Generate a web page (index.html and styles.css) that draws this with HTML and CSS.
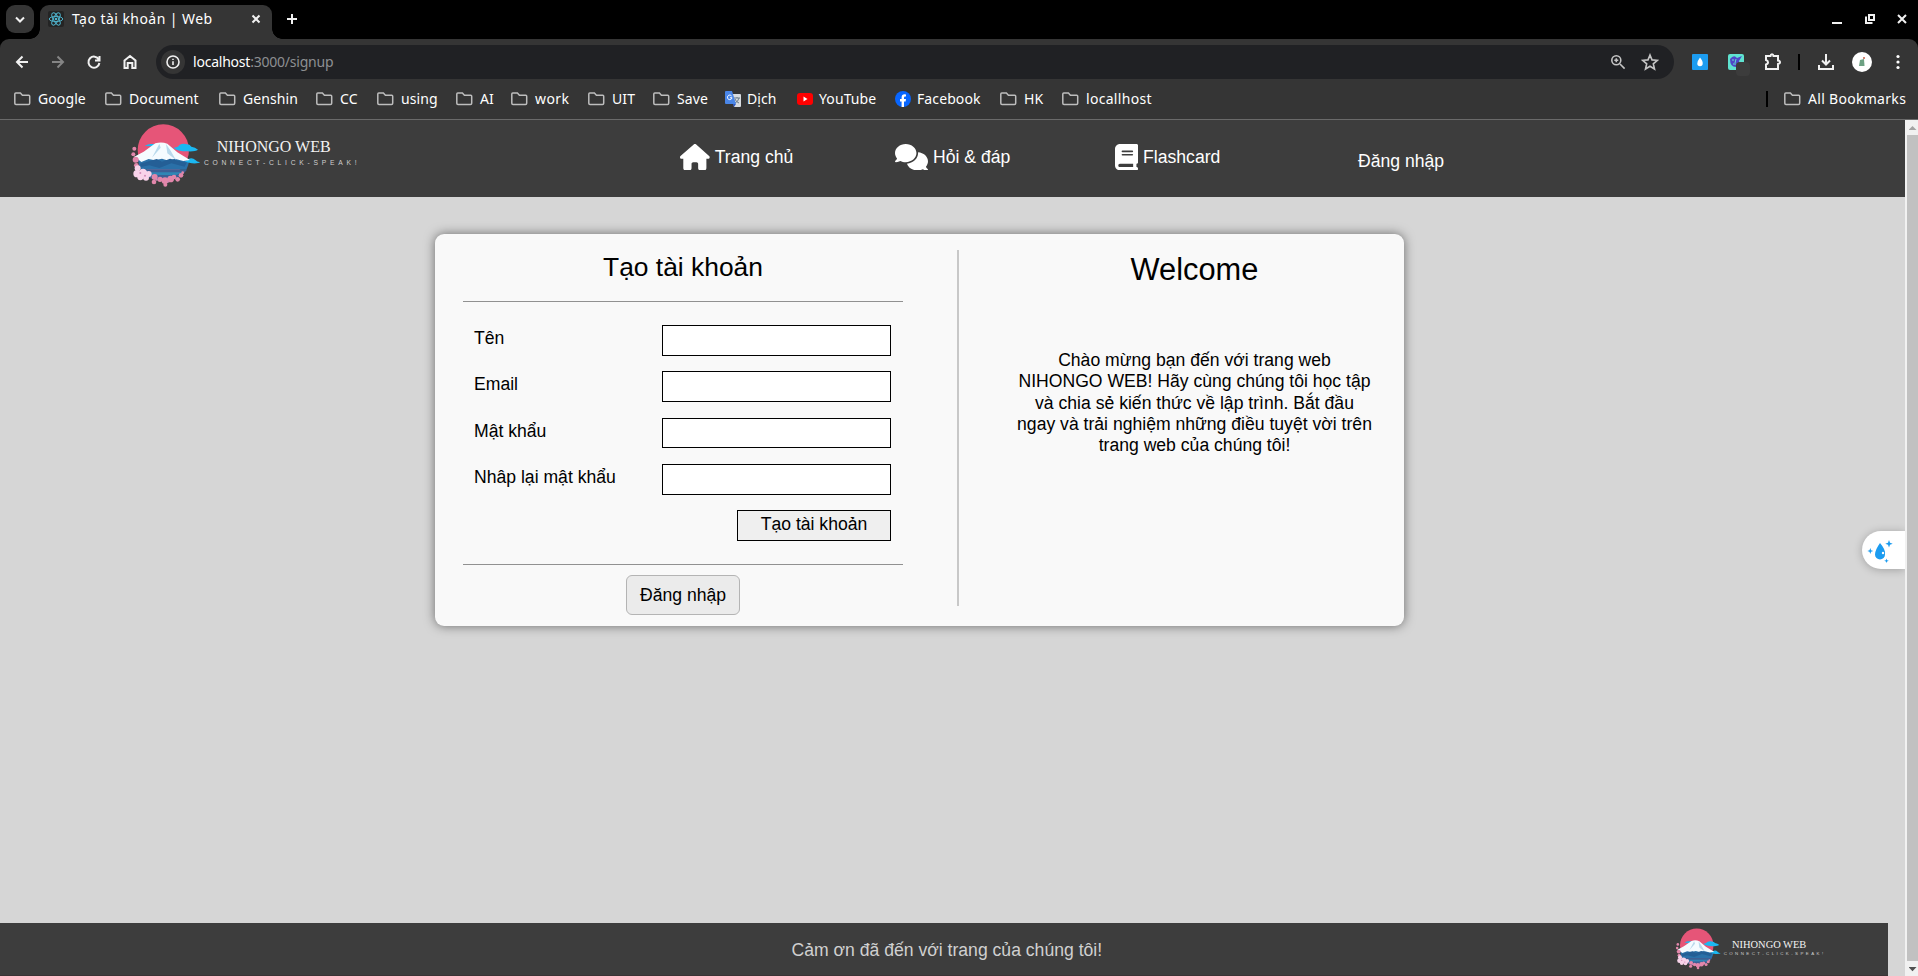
FILE: index.html
```html
<!DOCTYPE html>
<html lang="vi">
<head>
<meta charset="utf-8">
<title>Tạo tài khoản | Web</title>
<link rel="stylesheet" href="styles.css">
</head>
<body>
<svg class="defs" width="0" height="0">
  <symbol id="folder" viewBox="0 0 17 14"><path d="M1.800 1h4.600l2 2.200h6.300q1 0 1 1v7q0 1.200-1.200 1.200H2Q.8 12.400.8 11.200V2Q.8 1 1.800 1z" fill="none" stroke="#bdbdbd" stroke-width="1.500"/></symbol>
  <symbol id="fuji" viewBox="60 35 216 200">
    <circle cx="160" cy="119" r="77" fill="#e65578"/>
    <path d="M84 148q76-28 154 0q-2 16-9 30H94q-9-14-10-30z" fill="#2a70a8"/>
    <path d="M92 178h139q-24 34-70 34t-69-34z" fill="#3d5f94"/>
    <path d="M100 186h118l-20 8h-78z" fill="#2f86b5"/>
    <path d="M104 107q12-8 22-6l14 1-8 6zM190 112q14 0 18-8 12-7 22-2 10 0 14 7 12 2 20 9-8 6-30 5-34 0-44-11zM224 153q8 0 10-6 12-8 22 2 5 5 14 7-4 4-24 3-14-1-22-6z" fill="#1bb8f2"/>
    <path d="M71 140l30-16 35-25q18-6 36 1l30 26 38 23-20 3-26-7-18 6-20-6-22 5-18-4-22 9-10-8z" fill="#f5fbff"/>
    <path d="M148 100l-22 42 26-30zM168 101l4 28 26 20-16-28z" fill="#b9d9ec"/>
    <path d="M90 160l50-14 16 8 24-9 50 12-6 12-40-10-36 14-30-8-26 5z" fill="#245f96"/>
    <g fill="#e287ab"><circle cx="73" cy="115" r="6"/><circle cx="70" cy="132" r="6"/><circle cx="77" cy="148" r="9"/><circle cx="79" cy="165" r="7"/><circle cx="134" cy="200" r="9"/><circle cx="132" cy="215" r="7"/><circle cx="150" cy="207" r="8"/><circle cx="165" cy="211" r="10"/><circle cx="166" cy="223" r="6"/><circle cx="182" cy="206" r="10"/><circle cx="192" cy="200" r="7"/><circle cx="203" cy="207" r="7"/><circle cx="213" cy="195" r="7"/><circle cx="218" cy="187" r="4"/></g>
    <g fill="#f8d3ea"><circle cx="83" cy="174" r="9"/><circle cx="81" cy="190" r="11"/><circle cx="99" cy="188" r="13"/><circle cx="91" cy="201" r="9"/><circle cx="108" cy="202" r="9"/><circle cx="116" cy="191" r="9"/></g>
    <g fill="#d18bb8"><circle cx="91" cy="188" r="3"/><circle cx="105" cy="196" r="3"/><circle cx="140" cy="208" r="3"/><circle cx="174" cy="214" r="3"/></g>
  </symbol>
</svg>

<div class="tabstrip">
  <div class="tab-search"><svg width="28" height="28"><path d="M10 12.500l4 4 4-4" class="w2"/></svg></div>
  <div class="tab">
    <svg width="16" height="16" viewBox="0 0 16 16"><rect width="16" height="16" rx="2" fill="#242424"/><g fill="none" stroke="#4fb3cc" stroke-width="1"><ellipse cx="8" cy="8" rx="6.800" ry="2.600"/><ellipse cx="8" cy="8" rx="6.800" ry="2.600" transform="rotate(60 8 8)"/><ellipse cx="8" cy="8" rx="6.800" ry="2.600" transform="rotate(120 8 8)"/></g><circle cx="8" cy="8" r="1.300" fill="#4fb3cc"/></svg>
    <span class="tab-title">Tạo tài khoản | Web</span>
    <svg class="tab-close" width="10" height="10"><path d="M1.500 1.500l7 7m0-7l-7 7" class="w2"/></svg>
  </div>
  <svg class="new-tab" width="12" height="12"><path d="M6 1v10M1 6h10" class="w2"/></svg>
  <div class="window-buttons">
    <svg width="10" height="10"><path d="M0 9h10" class="w2"/></svg>
    <svg width="10" height="10"><path d="M4 1h5v5H4zM1 2.500V9h6.500" class="w2"/></svg>
    <svg width="10" height="10"><path d="M1 1l8 8m0-8l-8 8" class="w2"/></svg>
  </div>
</div>

<div class="toolbar">
  <div class="nav-buttons">
    <svg width="16" height="16"><path d="M14 8H3m5.500-5.500L3 8l5.500 5.500" class="w2"/></svg>
    <svg width="16" height="16"><path d="M2 8h11M7.500 2.500L13 8l-5.500 5.500" class="w2 dim"/></svg>
    <svg width="16" height="16"><path d="M12.800 5.500A5.500 5.500 0 1 0 13.400 9M13.500 2v4.500H9" class="w2"/></svg>
    <svg width="16" height="16"><path d="M2.500 6.500L8 2l5.500 4.500V14h-3.200V9H5.700v5H2.500z" class="w2"/></svg>
  </div>
  <div class="omnibox">
    <span class="site-info"><svg width="16" height="16"><circle cx="8" cy="8" r="6" class="w2 thin"/><path d="M8 7.300V11M8 4.700v1.400" class="w2 thin"/></svg></span>
    <span class="url">localhost<span class="url-rest">:3000/signup</span></span>
    <svg class="zoom-icon" width="16" height="16"><g class="g2"><circle cx="6.300" cy="6.300" r="4.500"/><path d="M10 10l4.600 4.600M4.300 6.300h4M6.300 4.300v4"/></g></svg>
    <svg class="star" width="18" height="18"><path d="M9 2l2 4.900 5.300.4-4 3.500 1.200 5.200L9 13.200 4.500 16l1.200-5.200-4-3.500L7 6.900z" class="g2"/></svg>
  </div>
  <div class="extensions">
    <svg width="16" height="16"><rect width="16" height="16" rx="1" fill="#1c9cf0"/><path d="M8 3.500q3 3.500 2.700 6a2.700 2.700 0 0 1-5.400 0q0-2.500 2.700-6z" fill="#fff"/></svg>
    <svg width="22" height="22"><rect width="16" height="16" rx="2" fill="#5fe3d0"/><path d="M2 5q4-5 7-1l5-2-3 5q2 4-3 6-6 0-6-8z" fill="#5046c8"/><path d="M5 5v2m3-2l-1 4m-2 1h3" stroke="#5fe3d0"/><rect x="8" y="8" width="14" height="14" rx="4" fill="#3c3c3c"/></svg>
    <svg width="18" height="18"><path d="M2 3h4.500q.2-1.800 1.500-1.800T9.500 3H14v4.600q2 .3 2 1.700t-2 1.700V16H2v-4.500q2-.4 2-2.200T2 7z" class="w2"/></svg>
    <i class="bar"></i>
    <svg width="18" height="18"><path d="M9 1v10M5 7.500l4 4 4-4M2 12v4h14v-4" class="w2"/></svg>
    <svg width="20" height="20"><circle cx="10" cy="10" r="10" fill="#fff"/><path d="M8 8l4-1 .5 7H7z" fill="#6da183"/><circle cx="12" cy="6" r="1" fill="#c65b45"/></svg>
    <svg width="4" height="16"><g fill="#fff"><circle cx="2" cy="2.500" r="1.600"/><circle cx="2" cy="8" r="1.600"/><circle cx="2" cy="13.500" r="1.600"/></g></svg>
  </div>
</div>

<div class="bookmarks">
  <a class="bm b1"><svg><use href="#folder"/></svg>Google</a>
  <a class="bm b2"><svg><use href="#folder"/></svg>Document</a>
  <a class="bm b3"><svg><use href="#folder"/></svg>Genshin</a>
  <a class="bm b4"><svg><use href="#folder"/></svg>CC</a>
  <a class="bm b5"><svg><use href="#folder"/></svg>using</a>
  <a class="bm b6"><svg><use href="#folder"/></svg>AI</a>
  <a class="bm b7"><svg><use href="#folder"/></svg>work</a>
  <a class="bm b8"><svg><use href="#folder"/></svg>UIT</a>
  <a class="bm b9"><svg><use href="#folder"/></svg>Save</a>
  <a class="bm b10 fav"><svg viewBox="0 0 16 16"><path d="M7 3h8q1 0 1 1v11q0 1-1 1H9z" fill="#d8dce0"/><path d="M9 7h6M12 6v1m2 0q-1 4-4 5m0-4q1 3 4 4" stroke="#6a7c8a" fill="none"/><path d="M1 0h6l4 13H1q-1 0-1-1V1q0-1 1-1z" fill="#4a86e8"/><path d="M8 13h3l-2 3z" fill="#2a56c6"/><path d="M6.600 5A2.300 2.300 0 1 0 7 6.800H5" stroke="#fff" fill="none"/></svg>Dịch</a>
  <a class="bm b11 fav"><svg viewBox="0 0 16 16"><rect y="2" width="16" height="12" rx="3" fill="#f00"/><path d="M6.500 5.500v5L10.500 8z" fill="#fff"/></svg>YouTube</a>
  <a class="bm b12 fav"><svg viewBox="0 0 16 16"><circle cx="8" cy="8" r="8" fill="#0866ff"/><path d="M6.600 16v-5.500H5V8h1.600V6.500Q6.600 3.300 9.600 3.300l1.400.1v2.200h-1Q9 5.600 9 6.700V8h2l-.4 2.500H9V16z" fill="#fff"/></svg>Facebook</a>
  <a class="bm b13"><svg><use href="#folder"/></svg>HK</a>
  <a class="bm b14"><svg><use href="#folder"/></svg>locallhost</a>
  <i class="bar"></i>
  <a class="bm b15"><svg><use href="#folder"/></svg>All Bookmarks</a>
</div>

<div class="viewport">
  <div class="page">
    <header class="header">
      <div class="logo"><svg><use href="#fuji"/></svg><div class="logo-text"><div class="logo-name">NIHONGO WEB</div><div class="logo-tag">CONNECT-CLICK-SPEAK!</div></div></div>
      <nav class="menu">
        <a class="m1"><svg width="29.700" height="26.400" viewBox="0 0 576 512"><path d="M575.800 255.500c0 18-15 32.100-32 32.100h-32l.7 160.200c0 2.700-.2 5.400-.5 8.100V472c0 22.100-17.900 40-40 40H456c-1.100 0-2.200 0-3.300-.1c-1.400 .1-2.800 .1-4.200 .1H416 392c-22.100 0-40-17.900-40-40V448 384c0-17.700-14.300-32-32-32H256c-17.700 0-32 14.300-32 32v64 24c0 22.100-17.900 40-40 40H160 128.100c-1.500 0-3-.1-4.500-.2c-1.200 .1-2.400 .2-3.600 .2H104c-22.100 0-40-17.900-40-40V360c0-.9 0-1.900 .1-2.800V287.600H32c-18 0-32-14-32-32.100c0-9 3-17 10-24L266.400 8c7-7 15-8 22-8s15 2 21 7L564.800 231.500c8 7 12 15 11 24z"/></svg>Trang chủ</a>
        <a class="m2"><svg width="33" height="26.400" viewBox="0 0 640 512"><path d="M208 352c114.900 0 208-78.800 208-176S322.900 0 208 0S0 78.800 0 176c0 38.600 14.700 74.300 39.600 103.400c-3.500 9.400-8.700 17.700-14.200 24.700c-4.800 6.200-9.700 11-13.300 14.300c-1.800 1.600-3.300 2.900-4.300 3.700c-.5 .4-.9 .7-1.100 .8l-.2 .2C1 327.200-1.400 334.400 .8 340.900S9.100 352 16 352c21.800 0 43.800-5.600 62.100-12.500c9.200-3.500 17.800-7.400 25.200-11.400C134.100 343.300 169.800 352 208 352zM448 176c0 112.300-99.100 196.900-216.500 207C255.800 457.400 336.400 512 432 512c38.200 0 73.900-8.700 104.700-23.900c7.500 4 16 7.900 25.200 11.400c18.300 6.900 40.300 12.500 62.100 12.500c6.900 0 13.100-4.500 15.200-11.100c2.100-6.600-.2-13.800-5.800-17.900l-.2-.2c-.2-.2-.6-.4-1.100-.8c-1-.8-2.500-2-4.300-3.700c-3.600-3.300-8.500-8.100-13.300-14.300c-5.500-7-10.700-15.400-14.200-24.700c24.900-29 39.600-64.700 39.600-103.400c0-92.800-84.900-168.900-192.600-175.500c.4 5.100 .6 10.300 .6 15.500z"/></svg>Hỏi &amp; đáp</a>
        <a class="m3"><svg width="23.100" height="26.400" viewBox="0 0 448 512"><path d="M96 0C43 0 0 43 0 96V416c0 53 43 96 96 96H384h32c17.700 0 32-14.300 32-32s-14.300-32-32-32V384c17.700 0 32-14.300 32-32V32c0-17.700-14.300-32-32-32H384 96zm0 384H352v64H96c-17.700 0-32-14.300-32-32s14.300-32 32-32zm32-240c0-8.800 7.200-16 16-16H336c8.800 0 16 7.200 16 16s-7.200 16-16 16H144c-8.800 0-16-7.200-16-16zm16 48H336c8.800 0 16 7.200 16 16s-7.200 16-16 16H144c-8.800 0-16-7.200-16-16s7.200-16 16-16z"/></svg>Flashcard</a>
        <a class="m4">Đăng nhập</a>
      </nav>
    </header>

    <main class="content">
      <section class="card">
        <div class="signup">
          <h1>Tạo tài khoản</h1>
          <form class="form">
            <label class="row">Tên<input type="text"></label>
            <label class="row">Email<input type="text"></label>
            <label class="row password">Mật khẩu<input type="password"></label>
            <label class="row repeat">Nhâp lại mật khẩu<input type="password"></label>
            <button class="submit" type="button">Tạo tài khoản</button>
          </form>
          <button class="login" type="button">Đăng nhập</button>
        </div>
        <div class="divider"></div>
        <div class="welcome">
          <h2>Welcome</h2>
          <p>Chào mừng bạn đến với trang web<br>NIHONGO WEB! Hãy cùng chúng tôi học tập<br>và chia sẻ kiến thức về lập trình. Bắt đầu<br>ngay và trải nghiệm những điều tuyệt vời trên<br>trang web của chúng tôi!</p>
        </div>
      </section>
    </main>

    <footer class="footer">
      <span>Cảm ơn đã đến với trang của chúng tôi!</span>
      <div class="logo"><svg><use href="#fuji"/></svg><div class="logo-text"><div class="logo-name">NIHONGO WEB</div><div class="logo-tag">CONNECT-CLICK-SPEAK!</div></div></div>
    </footer>
    <div class="assistant"><svg width="30" height="26" viewBox="0 0 30 26"><g fill="#1c9cf0"><path d="M13 5q6 7 5 11.500a5 5 0 0 1-10 0Q8 12 13 5z"/><path d="M22 2l1 2.700 2.700 1-2.700 1L22 9.400l-1-2.700-2.700-1 2.700-1zM3.300 10l.8 2.200 2.200.8-2.200.8-.8 2.200-.8-2.200L.3 13l2.200-.8zM19.500 20.500l.6 1.700 1.700.6-1.700.6-.6 1.700-.6-1.700-1.700-.6 1.700-.6z"/></g><circle cx="16" cy="15" r="1.200" fill="#fff"/></svg></div>
  </div>
  <div class="scrollbar"><i class="arrow up"></i><i class="thumb"></i><i class="arrow down"></i></div>
</div>
</body>
</html>
```
FILE: styles.css
```css
* { box-sizing: border-box; }
body { margin: 0; width: 1918px; height: 976px; overflow: hidden; background: #000; color: #fff; font-family: "Liberation Sans", Arial, sans-serif; display: flex; flex-direction: column; }
svg { display: block; flex: none; }
.defs { position: absolute; }
.w2 { fill: none; stroke: #f1f1f1; stroke-width: 2; }
.dim { stroke: #858585; }
.thin { stroke-width: 1.6; }
.g2 { fill: none; stroke: #c4c4c4; stroke-width: 1.6; }

.tabstrip { height: 39px; display: flex; align-items: flex-start; padding: 5px 11px 0 6px; font-family: "Noto Sans", sans-serif; }
.tab-search { width: 28px; height: 28px; border-radius: 9px; background: #353535; }
.tab { position: relative; width: 232px; height: 34px; margin-left: 6px; padding: 0 11px 6px 8px; border-radius: 9px 9px 0 0; background: #353535; display: flex; align-items: center; }
.tab::before, .tab::after { content: ""; position: absolute; bottom: 0; width: 10px; height: 10px; }
.tab::before { left: -10px; background: radial-gradient(circle at 0 0, transparent 9.5px, #353535 10px); }
.tab::after { right: -10px; background: radial-gradient(circle at 100% 0, transparent 9.5px, #353535 10px); }
.tab-title { margin-left: 8px; font-size: 14px; letter-spacing: .45px; white-space: nowrap; padding-bottom: 1px; }
.tab-close { margin-left: auto; }
.new-tab { margin: 8px 0 0 14px; }
.window-buttons { margin-left: auto; display: flex; gap: 22.5px; padding-top: 9px; }

.toolbar { height: 45px; background: #353535; border-radius: 9px 9px 0 0; display: flex; align-items: center; padding: 0 0 0 14px; font-family: "Noto Sans", sans-serif; }
.nav-buttons { display: flex; gap: 20px; width: 142px; }
.omnibox { width: 1518px; height: 34px; border-radius: 17px; background: #202124; display: flex; align-items: center; padding: 0 15px 0 5px; margin-top: 1px; }
.site-info { width: 24px; height: 24px; border-radius: 12px; background: #353535; display: grid; place-items: center; }
.url { margin-left: 8px; font-size: 14px; letter-spacing: -.22px; padding-bottom: 2px; }
.url-rest { color: #8d8f92; }
.zoom-icon { margin-left: auto; }
.star { margin-left: 15px; }
.extensions { flex: 1; display: flex; align-items: center; padding-left: 18px; }
.extensions svg:nth-child(2) { margin: 6px 0 0 20px; }
.extensions svg:nth-child(3) { margin-left: 14px; }
.extensions .bar { margin-left: 16px; }
.extensions svg:nth-child(5) { margin-left: 17px; }
.extensions svg:nth-child(6) { margin-left: 17px; }
.extensions svg:nth-child(7) { margin-left: 24px; }
.bar { width: 2px; height: 16px; background: #000; }

.bookmarks { height: 36px; flex: none; background: #353535; border-bottom: 1px solid #6a6a6a; display: flex; align-items: center; padding: 0 0 6px 14px; font-family: "Noto Sans", sans-serif; font-size: 14px; letter-spacing: .1px; }
.bm { display: flex; align-items: center; white-space: nowrap; flex: none; height: 24px; }
.bm svg { width: 17px; height: 14px; margin-right: 7px; }
.bm.fav svg { width: 16px; height: 16px; margin-right: 6px; }
.b1 { width: 91px; } .b2 { width: 114px; } .b3 { width: 97px; } .b4 { width: 61px; } .b5 { width: 79px; }
.b6 { width: 55px; } .b7 { width: 77px; } .b8 { width: 65px; } .b9 { width: 72px; } .b10 { width: 72px; }
.b11 { width: 98px; } .b12 { width: 105px; } .b13 { width: 62px; }
.b7 { letter-spacing: .4px; }
.b14, .b15 { letter-spacing: .3px; }
.bookmarks .bar { margin-left: auto; margin-right: 16px; }
.b15 { width: 134px; }

.viewport { flex: 1; min-height: 0; display: flex; }
.page { position: relative; width: 1905px; height: 856px; background: #d6d6d6; display: flex; flex-direction: column; font-size: 17.6px; }
.header { height: 77px; background: #3d3d3d; display: flex; padding: 1.5px 0 0 130px; }
/* Logo scales with its font size: 16px in the header, smaller in the footer. */
.logo { width: 14.375em; height: 4.17em; font-size: 16px; display: flex; white-space: nowrap; }
.logo svg { width: 4.5em; height: 4.17em; }
.logo-text { padding: 1.03em 0 0 .12em; }
.logo-name { padding-left: .8em; font-family: "Liberation Serif", serif; line-height: 1.125em; color: #f2f2f2; }
.logo-tag { font-size: .42em; line-height: 2em; letter-spacing: .558em; color: #d0d0d0; }
.menu { display: flex; margin-left: 320px; color: #fff; height: 74px; }
.menu a { display: flex; align-items: center; gap: 5px; height: 71px; white-space: nowrap; }
.menu svg { fill: #fff; }
.m1 { width: 215px; } .m2 { width: 220px; } .m3 { width: 243px; }
.menu .m4 { height: 79px; }

.content { flex: 1; padding: 37px 0 0 435px; color: #000; }
.card { width: 969px; height: 392px; border-radius: 9px; background: #f9f9f9; box-shadow: 0 0 11px rgba(0, 0, 0, .5); padding: 16px 28px; display: flex; }
.signup { flex: none; width: 440px; display: flex; flex-direction: column; align-items: center; padding-top: 1px; }
h1, h2 { margin: 0; font-weight: 400; text-align: center; }
h1 { flex: none; font-size: 26.4px; line-height: 32px; height: 50px; }
.form { flex: none; width: 440px; height: 264px; border: solid #919191; border-width: 1px 0; padding: 23px 12px 0 11px; display: flex; flex-direction: column; gap: 15px; }
.row { display: flex; flex: none; justify-content: space-between; height: 31px; line-height: 26px; }
.row input { width: 229px; height: 31px; border: 1px solid #000; background: #fff; }
.row.password { margin-top: 1px; }
.row.password input { height: 30px; }
.submit { flex: none; align-self: flex-end; width: 154px; height: 31px; border: 1px solid #000; background: #efefef; font: inherit; padding: 0 0 2px; color: #000; }
.login { flex: none; margin-top: 10px; width: 114px; height: 40px; border: 1px solid #b4b4b4; border-radius: 6px; background: #ebebeb; font: inherit; padding: 0; color: #000; }
.divider { flex: none; width: 2px; height: 356px; margin-left: 54px; background: #c8c8c8; }
.welcome { width: 417px; margin-left: 27px; padding-top: 1px; flex: none; text-align: center; }
h2 { font-size: 30.8px; line-height: 38px; }
.welcome p { margin: 61px 0 0; line-height: 21.25px; white-space: nowrap; }

.footer { width: 1888px; height: 53px; background: #3d3d3d; border-bottom: 1px solid #3b3335; display: flex; align-items: center; color: #d0d0d0; padding-left: 791.5px; }
.footer > span { padding-top: 2px; }
.footer .logo { font-size: 10.44px; margin-left: auto; margin-right: 62.5px; }
.footer .logo-text { padding-top: 1.1em; }
.assistant { position: absolute; right: 0; top: 411px; width: 43px; height: 38px; border-radius: 19px 0 0 19px; background: #fff; box-shadow: 0 1px 8px rgba(0, 0, 0, .25); padding: 7px 0 0 5px; clip-path: inset(-12px 0 -12px -12px); }
.scrollbar { width: 13px; background: #f1f1f1; display: flex; flex-direction: column; align-items: center; padding-left: 2px; }
.thumb { width: 11px; flex: 1; background: #c1c1c1; }
.arrow { height: 15px; width: 8px; }
.up { background: #a3a3a3; clip-path: polygon(50% 40%, 100% 66%, 0 66%); }
.down { background: #505050; clip-path: polygon(0 40%, 100% 40%, 50% 68%); }
```
